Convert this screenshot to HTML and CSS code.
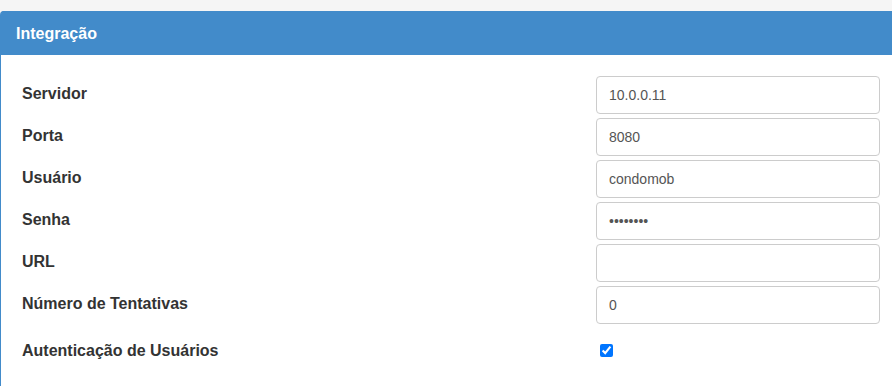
FILE: index.html
```html
<!DOCTYPE html>
<html lang="pt-BR">
<head>
    <meta charset="UTF-8">
    <meta name="viewport" content="width=device-width, initial-scale=1.0">
    <title>Integração</title>
    <link rel="stylesheet" href="styles.css">
</head>
<body>
    <div class="panel">
        <div class="panel-heading">Integração</div>
        <div class="panel-body">
            <label class="field-label" for="servidor">Servidor</label>
            <input class="form-control" id="servidor" type="text" value="10.0.0.11">

            <label class="field-label" for="porta">Porta</label>
            <input class="form-control" id="porta" type="text" value="8080">

            <label class="field-label" for="usuario">Usuário</label>
            <input class="form-control" id="usuario" type="text" value="condomob">

            <label class="field-label" for="senha">Senha</label>
            <input class="form-control" id="senha" type="password" value="12345678">

            <label class="field-label" for="url">URL</label>
            <input class="form-control" id="url" type="text" value="">

            <label class="field-label" for="tentativas">Número de Tentativas</label>
            <input class="form-control" id="tentativas" type="text" value="0">

            <label class="field-label check-label" for="autenticacao">Autenticação de Usuários</label>
            <div class="check-cell">
                <input class="check" id="autenticacao" type="checkbox" checked>
            </div>
        </div>
    </div>
</body>
</html>
```

FILE: styles.css
```css
body {
    margin: 0;
    background: #f5f5f5;
    font-family: "Liberation Sans", Arial, sans-serif;
    color: #333;
    overflow: hidden;
}
.panel {
    box-sizing: border-box;
    margin-top: 11px;
    background: white;
    border: 1px solid #428bca;
    border-right: none;
    border-bottom: none;
    border-radius: 4px 0 0 0;
    height: 375px;
}
.panel-heading {
    background: #428bca;
    color: white;
    font-size: 16px;
    font-weight: bold;
    height: 44px;
    line-height: 45px;
    padding: 0 15px;
    margin-top: -1px;
    border-radius: 3px 0 0 0;
}
.panel-body {
    display: grid;
    grid-template-columns: 1fr 284px;
    row-gap: 4px;
    padding: 21px 12px 0 21px;
}
.field-label {
    font-size: 16px;
    font-weight: bold;
    display: flex;
    align-items: center;
    padding-bottom: 2px;
}
.check-label {
    height: 38px;
    margin-top: 4px;
}
.form-control {
    box-sizing: border-box;
    width: 284px;
    height: 38px;
    margin: 0;
    padding: 0 12px;
    border: 1px solid #ccc;
    border-radius: 4px;
    font-family: "Liberation Sans", Arial, sans-serif;
    font-size: 14px;
    color: #555;
    background: white;
}
.check-cell {
    display: flex;
    align-items: center;
    margin-top: 4px;
    padding-bottom: 4px;
}
.check {
    margin: 0 0 0 4px;
    width: 13px;
    height: 13px;
}
```
